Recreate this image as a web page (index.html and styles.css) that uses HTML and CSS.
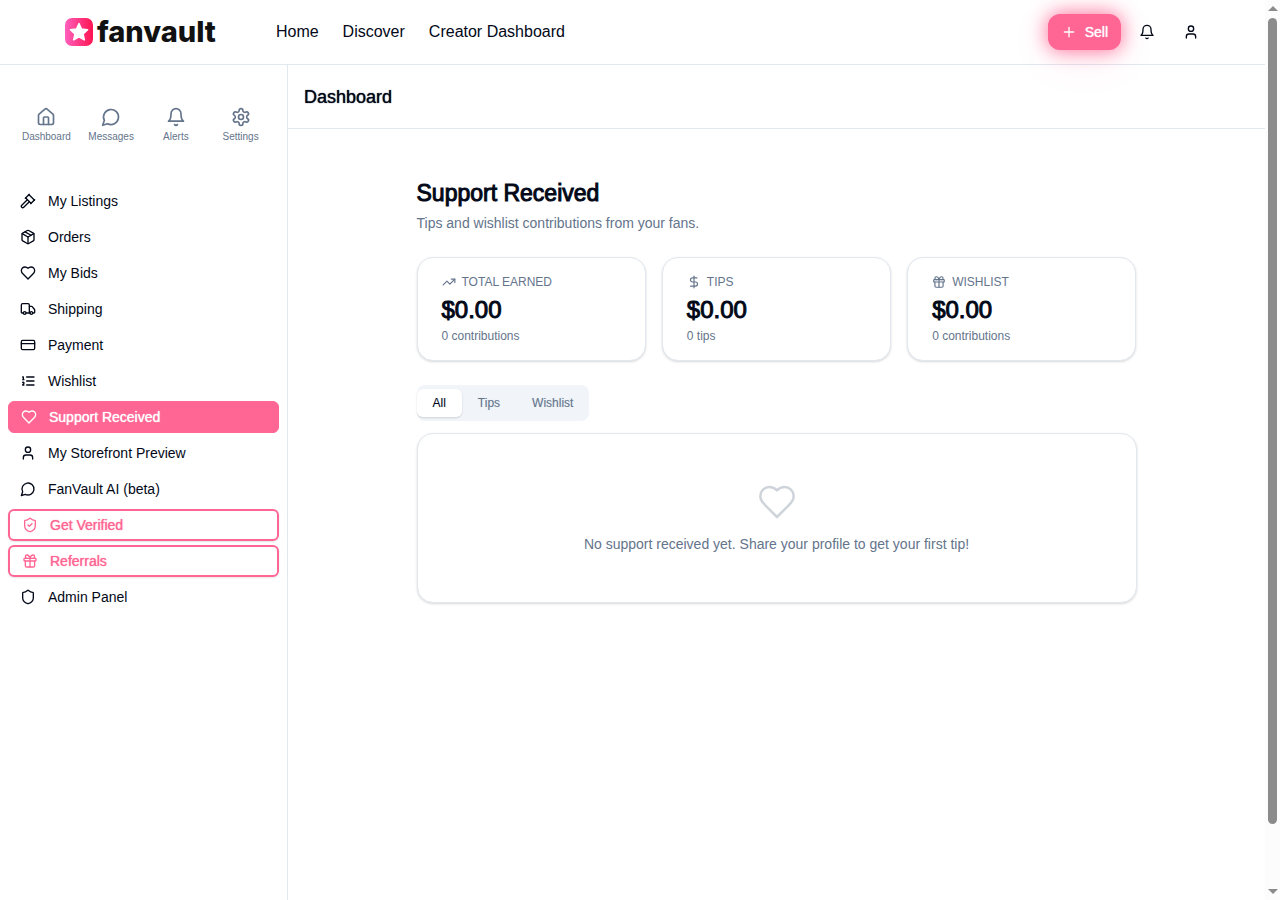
FILE: index.html
```html
<!DOCTYPE html>
<html lang="en">

<head>
    <meta charset="UTF-8">
    <meta name="viewport" content="width=device-width, initial-scale=1.0">
    <title>Support Received - fanvault</title>
    <link rel="stylesheet" href="styles.css">
</head>

<body>
    <!-- Shared icons -->
    <svg class="sprite" aria-hidden="true">
        <symbol id="plus" viewBox="0 0 24 24"><path d="M5 12h14M12 5v14"/></symbol>
        <symbol id="bell" viewBox="0 0 24 24"><path d="M6 8a6 6 0 0 1 12 0c0 7 3 9 3 9H3s3-2 3-9"/><path d="M10.3 21a1.94 1.94 0 0 0 3.4 0"/></symbol>
        <symbol id="user" viewBox="0 0 24 24"><path d="M19 21v-2a4 4 0 0 0-4-4H9a4 4 0 0 0-4 4v2"/><circle cx="12" cy="7" r="4"/></symbol>
        <symbol id="house" viewBox="0 0 24 24"><path d="M15 21v-8a1 1 0 0 0-1-1h-4a1 1 0 0 0-1 1v8"/><path d="M3 10a2 2 0 0 1 .709-1.528l7-5.999a2 2 0 0 1 2.582 0l7 5.999A2 2 0 0 1 21 10v9a2 2 0 0 1-2 2H5a2 2 0 0 1-2-2z"/></symbol>
        <symbol id="message" viewBox="0 0 24 24"><path d="M7.9 20A9 9 0 1 0 4 16.1L2 22Z"/></symbol>
        <symbol id="settings" viewBox="0 0 24 24"><path d="M12.22 2h-.44a2 2 0 0 0-2 2v.18a2 2 0 0 1-1 1.73l-.43.25a2 2 0 0 1-2 0l-.15-.08a2 2 0 0 0-2.73.73l-.22.38a2 2 0 0 0 .73 2.73l.15.1a2 2 0 0 1 1 1.72v.51a2 2 0 0 1-1 1.74l-.15.09a2 2 0 0 0-.73 2.73l.22.38a2 2 0 0 0 2.73.73l.15-.08a2 2 0 0 1 2 0l.43.25a2 2 0 0 1 1 1.73V20a2 2 0 0 0 2 2h.44a2 2 0 0 0 2-2v-.18a2 2 0 0 1 1-1.73l.43-.25a2 2 0 0 1 2 0l.15.08a2 2 0 0 0 2.73-.73l.22-.39a2 2 0 0 0-.73-2.73l-.15-.08a2 2 0 0 1-1-1.74v-.5a2 2 0 0 1 1-1.74l.15-.09a2 2 0 0 0 .73-2.73l-.22-.38a2 2 0 0 0-2.73-.73l-.15.08a2 2 0 0 1-2 0l-.43-.25a2 2 0 0 1-1-1.73V4a2 2 0 0 0-2-2z"/><circle cx="12" cy="12" r="3"/></symbol>
        <symbol id="gavel" viewBox="0 0 24 24"><path d="m14 13-8.381 8.38a1 1 0 0 1-3.001-3l8.384-8.381"/><path d="m16 16 6-6"/><path d="m21.5 10.5-8-8"/><path d="m8 8 6-6"/><path d="m8.5 7.5 8 8"/></symbol>
        <symbol id="package" viewBox="0 0 24 24"><path d="m7.5 4.27 9 5.15"/><path d="M21 8a2 2 0 0 0-1-1.73l-7-4a2 2 0 0 0-2 0l-7 4A2 2 0 0 0 3 8v8a2 2 0 0 0 1 1.73l7 4a2 2 0 0 0 2 0l7-4A2 2 0 0 0 21 16Z"/><path d="m3.3 7 8.7 5 8.7-5"/><path d="M12 22V12"/></symbol>
        <symbol id="heart" viewBox="0 0 24 24"><path d="M19 14c1.49-1.46 3-3.21 3-5.5A5.5 5.5 0 0 0 16.5 3c-1.76 0-3 .5-4.5 2-1.5-1.5-2.74-2-4.5-2A5.5 5.5 0 0 0 2 8.5c0 2.3 1.5 4.05 3 5.5l7 7Z"/></symbol>
        <symbol id="truck" viewBox="0 0 24 24"><path d="M14 18V6a2 2 0 0 0-2-2H4a2 2 0 0 0-2 2v11a1 1 0 0 0 1 1h2"/><path d="M15 18H9"/><path d="M19 18h2a1 1 0 0 0 1-1v-3.65a1 1 0 0 0-.22-.624l-3.48-4.35A1 1 0 0 0 17.52 8H14"/><circle cx="17" cy="18" r="2"/><circle cx="7" cy="18" r="2"/></symbol>
        <symbol id="card" viewBox="0 0 24 24"><rect width="20" height="14" x="2" y="5" rx="2"/><path d="M2 10h20"/></symbol>
        <symbol id="list" viewBox="0 0 24 24"><path d="M10 12h11M10 18h11M10 6h11M4 10h2M4 6h1v4M6 18H4c0-1 2-2 2-3s-1-1.5-2-1"/></symbol>
        <symbol id="shield" viewBox="0 0 24 24"><path d="M20 13c0 5-3.5 7.5-7.66 8.95a1 1 0 0 1-.67-.01C7.5 20.5 4 18 4 13V6a1 1 0 0 1 1-1c2 0 4.5-1.2 6.24-2.72a1.17 1.17 0 0 1 1.52 0C14.51 3.81 17 5 19 5a1 1 0 0 1 1 1z"/></symbol>
        <symbol id="shield-check" viewBox="0 0 24 24"><path d="M20 13c0 5-3.5 7.5-7.66 8.95a1 1 0 0 1-.67-.01C7.5 20.5 4 18 4 13V6a1 1 0 0 1 1-1c2 0 4.5-1.2 6.24-2.72a1.17 1.17 0 0 1 1.52 0C14.51 3.81 17 5 19 5a1 1 0 0 1 1 1z"/><path d="m9 12 2 2 4-4"/></symbol>
        <symbol id="gift" viewBox="0 0 24 24"><rect x="3" y="8" width="18" height="4" rx="1"/><path d="M12 8v13"/><path d="M19 12v7a2 2 0 0 1-2 2H7a2 2 0 0 1-2-2v-7"/><path d="M7.5 8a2.5 2.5 0 0 1 0-5A4.8 8 0 0 1 12 8a4.8 8 0 0 1 4.5-5 2.5 2.5 0 0 1 0 5"/></symbol>
        <symbol id="trending" viewBox="0 0 24 24"><path d="m22 7-8.5 8.5-5-5L2 17"/><path d="M16 7h6v6"/></symbol>
        <symbol id="dollar" viewBox="0 0 24 24"><path d="M12 2v20"/><path d="M17 5H9.5a3.5 3.5 0 0 0 0 7h5a3.5 3.5 0 0 1 0 7H6"/></symbol>
    </svg>

    <div class="window">
        <div class="page">
            <header class="topbar">
                <a class="logo" href="#">
                    <svg class="logo-mark" viewBox="0 0 28 28" aria-hidden="true">
                        <defs>
                            <linearGradient id="logoFill" x1="0" y1="0" x2="1" y2="0">
                                <stop offset="0" stop-color="#ff5fbd"/>
                                <stop offset="1" stop-color="#ff1450"/>
                            </linearGradient>
                        </defs>
                        <rect width="28" height="28" rx="7" fill="url(#logoFill)"/>
                        <path fill="#fff" stroke="#fff" stroke-width="1.5" stroke-linejoin="round" d="M14 5.5l2.5 5.6 6.1.7-4.5 4.1 1.2 6-5.3-3-5.3 3 1.2-6-4.5-4.1 6.1-.7z"/>
                    </svg>
                    <span class="logo-name">fanvault</span>
                </a>
                <nav class="main-nav">
                    <a href="#">Home</a>
                    <a href="#">Discover</a>
                    <a href="#">Creator Dashboard</a>
                </nav>
                <div class="actions">
                    <button class="sell" type="button"><svg class="icon"><use href="#plus"/></svg>Sell</button>
                    <button class="icon-button" type="button" aria-label="Notifications"><svg class="icon"><use href="#bell"/></svg></button>
                    <button class="icon-button" type="button" aria-label="Account"><svg class="icon"><use href="#user"/></svg></button>
                </div>
            </header>

            <div class="layout">
                <aside class="sidebar">
                    <nav class="shortcuts">
                        <a href="#"><svg class="icon"><use href="#house"/></svg>Dashboard</a>
                        <a href="#"><svg class="icon"><use href="#message"/></svg>Messages</a>
                        <a href="#"><svg class="icon"><use href="#bell"/></svg>Alerts</a>
                        <a href="#"><svg class="icon"><use href="#settings"/></svg>Settings</a>
                    </nav>
                    <nav class="menu">
                        <a href="#"><svg class="icon"><use href="#gavel"/></svg>My Listings</a>
                        <a href="#"><svg class="icon"><use href="#package"/></svg>Orders</a>
                        <a href="#"><svg class="icon"><use href="#heart"/></svg>My Bids</a>
                        <a href="#"><svg class="icon"><use href="#truck"/></svg>Shipping</a>
                        <a href="#"><svg class="icon"><use href="#card"/></svg>Payment</a>
                        <a href="#"><svg class="icon"><use href="#list"/></svg>Wishlist</a>
                        <a class="active" href="#" aria-current="page"><svg class="icon"><use href="#heart"/></svg>Support Received</a>
                        <a href="#"><svg class="icon"><use href="#user"/></svg>My Storefront Preview</a>
                        <a href="#"><svg class="icon"><use href="#message"/></svg>FanVault AI (beta)</a>
                        <a class="outlined" href="#"><svg class="icon"><use href="#shield-check"/></svg>Get Verified</a>
                        <a class="outlined" href="#"><svg class="icon"><use href="#gift"/></svg>Referrals</a>
                        <a href="#"><svg class="icon"><use href="#shield"/></svg>Admin Panel</a>
                    </nav>
                </aside>

                <main class="main">
                    <div class="page-bar">Dashboard</div>
                    <div class="content">
                        <h1>Support Received</h1>
                        <p class="intro">Tips and wishlist contributions from your fans.</p>

                        <div class="stats">
                            <section class="card stat">
                                <h2><svg class="icon"><use href="#trending"/></svg>TOTAL EARNED</h2>
                                <p class="amount">$0.00</p>
                                <p class="count">0 contributions</p>
                            </section>
                            <section class="card stat">
                                <h2><svg class="icon"><use href="#dollar"/></svg>TIPS</h2>
                                <p class="amount">$0.00</p>
                                <p class="count">0 tips</p>
                            </section>
                            <section class="card stat">
                                <h2><svg class="icon"><use href="#gift"/></svg>WISHLIST</h2>
                                <p class="amount">$0.00</p>
                                <p class="count">0 contributions</p>
                            </section>
                        </div>

                        <div class="tabs" role="tablist">
                            <button type="button" role="tab" aria-selected="true">All</button>
                            <button type="button" role="tab" aria-selected="false">Tips</button>
                            <button type="button" role="tab" aria-selected="false">Wishlist</button>
                        </div>

                        <section class="card empty">
                            <svg class="icon"><use href="#heart"/></svg>
                            <p>No support received yet. Share your profile to get your first tip!</p>
                        </section>
                    </div>
                </main>
            </div>
        </div>

        <div class="scrollbar" aria-hidden="true">
            <span class="arrow up"></span>
            <span class="thumb"></span>
            <span class="arrow down"></span>
        </div>
    </div>
</body>

</html>
```
FILE: styles.css
```css
* {
    box-sizing: border-box;
}

body {
    margin: 0;
    font-family: "Liberation Sans", Arial, sans-serif;
    font-size: 14px;
    line-height: 20px;
    color: #020817;
    background: #fff;
}

h1,
h2,
p {
    margin: 0;
}

a {
    color: inherit;
    text-decoration: none;
}

button {
    font: inherit;
    color: inherit;
    background: none;
    border: 0;
    padding: 0;
    cursor: pointer;
}

.sprite {
    display: none;
}

.icon {
    width: 16px;
    height: 16px;
    flex-shrink: 0;
    fill: none;
    stroke: currentColor;
    stroke-width: 2;
    stroke-linecap: round;
    stroke-linejoin: round;
}

.window {
    display: flex;
    min-height: 100vh;
}

.page {
    flex: 1;
    min-width: 0;
    display: flex;
    flex-direction: column;
}

/* Top bar */
.topbar {
    display: flex;
    align-items: center;
    height: 65px;
    padding: 0 56px 0 65px;
    border-bottom: 1px solid #e2e8f0;
}

.logo {
    display: flex;
    align-items: center;
    gap: 4px;
}

.logo-mark {
    width: 28px;
    height: 28px;
}

.logo-name {
    font-family: Inter, sans-serif;
    font-size: 29px;
    font-weight: 800;
    line-height: 32px;
    color: #111;
}

.main-nav {
    display: flex;
    gap: 24px;
    margin-left: 60px;
    font-size: 16px;
    line-height: 24px;
}

.actions {
    display: flex;
    gap: 8px;
    margin-left: auto;
}

.sell {
    display: flex;
    align-items: center;
    gap: 8px;
    height: 36px;
    padding: 0 13px;
    border-radius: 12px;
    color: #fff;
    background: #ff6694;
    text-shadow: 0 0 1px #fff;
    box-shadow: 0 0 20px #ff6694, 0 8px 40px rgba(255, 102, 148, 0.1);
}

.icon-button {
    display: flex;
    align-items: center;
    justify-content: center;
    width: 36px;
    height: 36px;
}

/* Sidebar */
.layout {
    flex: 1;
    display: flex;
}

.sidebar {
    width: 288px;
    flex-shrink: 0;
    border-right: 1px solid #e2e8f0;
}

.shortcuts {
    display: grid;
    grid-template-columns: repeat(4, 1fr);
    gap: 4px;
    padding: 42px 16px 0;
    font-size: 10px;
    line-height: 16px;
    color: #64748b;
}

.shortcuts a {
    display: flex;
    flex-direction: column;
    align-items: center;
    gap: 2px;
}

.shortcuts .icon {
    width: 20px;
    height: 20px;
}

.menu {
    display: flex;
    flex-direction: column;
    gap: 4px;
    padding: 40px 8px;
}

.menu a {
    display: flex;
    align-items: center;
    gap: 12px;
    height: 32px;
    padding: 0 12px;
    border-radius: 6px;
}

.menu .active {
    color: #fff;
    background: #ff6694;
    border: 1px solid #ff6694;
    text-shadow: 0 0 1px #fff;
}

.menu .outlined {
    color: #ff6694;
    border: 2px solid #ff6694;
    text-shadow: 0 0 1px #ff6694;
    box-shadow: 0 1px 2px rgba(0, 0, 0, 0.1);
}

/* Main column */
.main {
    flex: 1;
    min-width: 0;
}

.page-bar {
    height: 64px;
    padding: 18px 16px;
    border-bottom: 1px solid #e2e8f0;
    font-size: 18px;
    line-height: 28px;
    text-shadow: 0 0 1px #020817;
}

.content {
    max-width: 720px;
    margin: 0 auto;
    padding: 48px 0;
}

h1 {
    font-size: 23px;
    font-weight: 400;
    line-height: 32px;
    -webkit-text-stroke: 1px #020817;
}

.intro {
    margin-top: 4px;
    color: #64748b;
}

.card {
    border: 1px solid #e2e8f0;
    border-radius: 16px;
    background: #fff;
    box-shadow: 0 1px 3px rgba(0, 0, 0, 0.1), 0 1px 2px rgba(0, 0, 0, 0.06);
}

.stats {
    display: grid;
    grid-template-columns: repeat(3, 1fr);
    gap: 16px;
    margin-top: 24px;
}

.stat {
    padding: 16px 24px;
    font-size: 12px;
    line-height: 16px;
    color: #64748b;
}

.stat h2 {
    display: flex;
    align-items: center;
    gap: 6px;
    font-size: 12px;
    font-weight: 400;
}

.stat .icon {
    width: 14px;
    height: 14px;
}

.amount {
    margin: 4px 0 2px;
    font-size: 24px;
    line-height: 32px;
    color: #020817;
    -webkit-text-stroke: 1px #020817;
}

.tabs {
    display: inline-flex;
    align-items: center;
    height: 36px;
    margin: 24px 0 12px;
    border-radius: 8px;
    background: #f1f5f9;
    vertical-align: top;
}

.tabs button {
    height: 28px;
    padding: 0 16px;
    border-radius: 6px;
    font-size: 12px;
    line-height: 16px;
    color: #64748b;
    text-shadow: 0 0 1px #cbd5e1;
}

.tabs button[aria-selected="true"] {
    color: #020817;
    background: #fff;
    box-shadow: 0 1px 2px rgba(0, 0, 0, 0.15);
}

.empty {
    display: flex;
    flex-direction: column;
    align-items: center;
    gap: 12px;
    padding: 48px 24px;
    text-align: center;
    color: #64748b;
}

.empty .icon {
    width: 40px;
    height: 40px;
    stroke-width: 1.5;
    opacity: 0.3;
}

/* Scrollbar */
.scrollbar {
    display: flex;
    flex-direction: column;
    align-items: center;
    width: 15px;
    height: 100vh;
    padding: 6px 0;
    background: #fcfcfc;
}

.arrow {
    border: 5px solid transparent;
}

.up {
    border-top: 0;
    border-bottom-color: #8b8b8b;
}

.down {
    margin-top: auto;
    border-bottom: 0;
    border-top-color: #8b8b8b;
}

.thumb {
    width: 9px;
    height: calc(100vh - 94px);
    margin-top: 7px;
    border-radius: 5px;
    background: #8b8b8b;
}
```
